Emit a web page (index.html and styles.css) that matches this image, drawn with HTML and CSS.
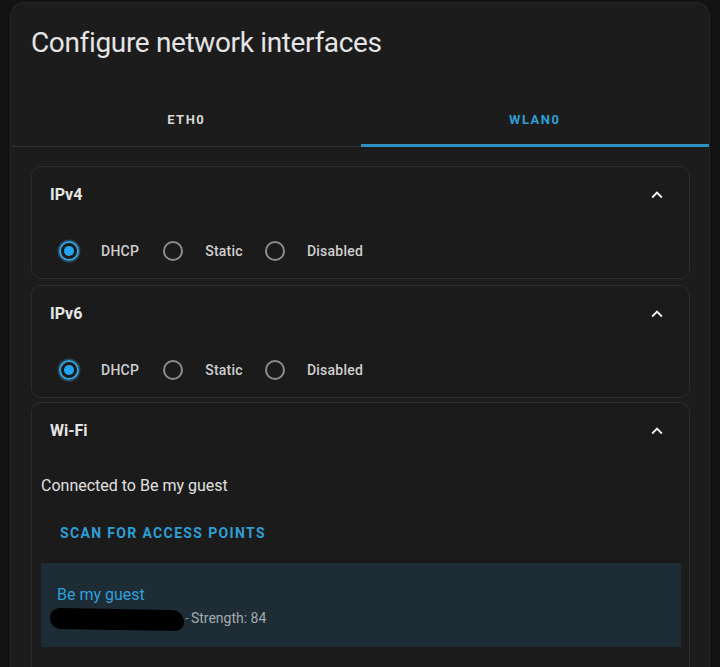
FILE: index.html
```
<!DOCTYPE html>
<html>
<head>
<meta charset="utf-8">
<link rel="stylesheet" href="styles.css">
</head>
<body>
<div class="dialog">
  <h1 class="title">Configure network interfaces</h1>
  <div class="tabs">
    <div class="tab">ETH0</div>
    <div class="tab active">WLAN0</div>
  </div>
  <div class="content">
    <section class="card">
      <div class="card-head">
        <span class="card-title">IPv4</span>
        <svg class="chev" viewBox="0 0 24 24"><path d="M7.41,15.41L12,10.83L16.59,15.41L18,14L12,8L6,14L7.41,15.41Z"/></svg>
      </div>
      <div class="radios">
        <label class="opt"><span class="radio on"></span><span class="lbl">DHCP</span></label>
        <label class="opt"><span class="radio"></span><span class="lbl">Static</span></label>
        <label class="opt"><span class="radio"></span><span class="lbl">Disabled</span></label>
      </div>
    </section>
    <section class="card">
      <div class="card-head">
        <span class="card-title">IPv6</span>
        <svg class="chev" viewBox="0 0 24 24"><path d="M7.41,15.41L12,10.83L16.59,15.41L18,14L12,8L6,14L7.41,15.41Z"/></svg>
      </div>
      <div class="radios">
        <label class="opt"><span class="radio on"></span><span class="lbl">DHCP</span></label>
        <label class="opt"><span class="radio"></span><span class="lbl">Static</span></label>
        <label class="opt"><span class="radio"></span><span class="lbl">Disabled</span></label>
      </div>
    </section>
    <section class="card wifi">
      <div class="card-head">
        <span class="card-title">Wi-Fi</span>
        <svg class="chev" viewBox="0 0 24 24"><path d="M7.41,15.41L12,10.83L16.59,15.41L18,14L12,8L6,14L7.41,15.41Z"/></svg>
      </div>
      <div class="wifi-body">
        <p class="connected">Connected to Be my guest</p>
        <div class="scan">SCAN FOR ACCESS POINTS</div>
        <div class="ap">
          <div class="ap-name">Be my guest</div>
          <div class="ap-meta"><span class="redact"></span><span class="dash">-</span>Strength: 84</div>
        </div>
      </div>
    </section>
  </div>
</div>
</body>
</html>
```
FILE: styles.css
```
html, body {
  margin: 0;
  padding: 0;
  height: 667px;
  overflow: hidden;
  background: #131313;
  font-family: Roboto, "Liberation Sans", sans-serif;
}
.dialog {
  margin: 2px 10px 0 10px;
  height: 665px;
  overflow: hidden;
  background: #1c1c1c;
  border: 1px solid #262626;
  border-bottom: none;
  border-radius: 14px 14px 0 0;
  box-sizing: border-box;
}
.title {
  margin: 0;
  padding: 22px 0 0 20px;
  font-size: 28px;
  line-height: 36px;
  font-weight: 400;
  color: #e4e4e4;
  letter-spacing: -0.35px;
}
.tabs {
  display: flex;
  margin-top: 36px;
  margin-left: 1px;
  border-bottom: 1px solid #303030;
}
.tab {
  flex: 1;
  height: 50px;
  display: flex;
  align-items: center;
  justify-content: center;
  padding-bottom: 3px;
  box-sizing: border-box;
  font-size: 13px;
  font-weight: 700;
  letter-spacing: 1.5px;
  color: #d8d8d8;
  border-bottom: 3px solid transparent;
  margin-bottom: -1px;
}
.tab.active {
  color: #2e9fd6;
  border-bottom-color: #2d8fc2;
}
.content {
  padding: 19px 19px 0 20px;
  display: flex;
  flex-direction: column;
  gap: 6px;
}
.card {
  border: 1px solid #2c2c2c;
  border-radius: 10px;
  background: #1b1b1b;
}
.card.wifi {
  margin-top: -2px;
  border-bottom: none;
  border-radius: 10px 10px 0 0;
}
.card-head {
  height: 55px;
  display: flex;
  align-items: center;
  justify-content: space-between;
  padding: 0 21px 0 18px;
}
.card-title {
  font-size: 16px;
  font-weight: 700;
  color: #e6e6e6;
}
.chev {
  width: 22px;
  height: 22px;
  fill: #f0f0f0;
}
.radios {
  display: flex;
  align-items: center;
  height: 48px;
  padding: 5px 0 3px 17px;
}
.opt {
  display: flex;
  align-items: center;
  margin-right: 12px;
}
.opt:first-child {
  margin-right: 14px;
}
.radio {
  width: 40px;
  height: 40px;
  display: flex;
  align-items: center;
  justify-content: center;
  position: relative;
}
.radio::before {
  content: "";
  width: 20px;
  height: 20px;
  box-sizing: border-box;
  border: 2px solid #8c8c8c;
  border-radius: 50%;
}
.radio.on::before {
  border-color: #35a3dc;
  box-shadow: 0 0 0 1.5px rgba(60, 150, 200, 0.35);
}
.radio.on::after {
  content: "";
  position: absolute;
  left: 15px;
  top: 15px;
  width: 10px;
  height: 10px;
  border-radius: 50%;
  background: #22a6f4;
}
.lbl {
  margin-left: 12px;
  font-size: 14px;
  font-weight: 500;
  color: #cfcfcf;
  letter-spacing: 0.25px;
}
.wifi-body {
  padding: 17px 8px 20px 9px;
}
.connected {
  margin: 0;
  font-size: 16px;
  line-height: 22px;
  color: #e0e0e0;
}
.scan {
  margin: 27px 0 0 19px;
  font-size: 14px;
  font-weight: 700;
  letter-spacing: 1.35px;
  color: #2e9fd6;
  line-height: 18px;
}
.ap {
  margin-top: 21px;
  background: #1e2c35;
  padding: 20px 16px 18px 16px;
}
.ap-name {
  font-size: 16px;
  line-height: 24px;
  color: #2fa0dc;
}
.ap-meta {
  display: flex;
  align-items: center;
  height: 22px;
  font-size: 14px;
  color: #a3aaaf;
}
.redact {
  display: inline-block;
  width: 134px;
  height: 21px;
  margin-left: -7px;
  margin-top: 2px;
  background: #000;
  border-radius: 11px 14px 10px 12px;
  transform: rotate(1deg);
}
.dash {
  margin: 0 2px 0 1px;
  color: #7a8186;
}
```
